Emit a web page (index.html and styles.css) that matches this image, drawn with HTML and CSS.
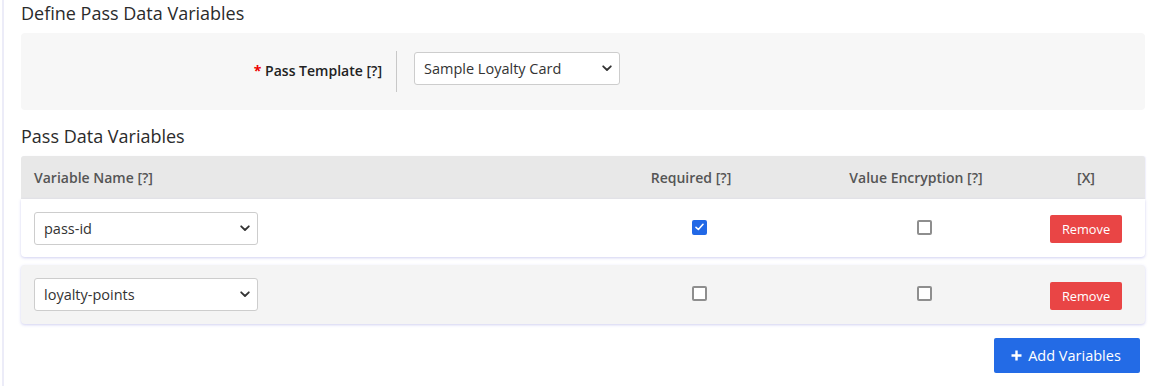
FILE: index.html
```html
<!DOCTYPE html>
<html>
<head>
<meta charset="utf-8">
<link rel="stylesheet" href="styles.css">
</head>
<body>
<div class="page">
  <h2 class="title">Define Pass Data Variables</h2>
  <div class="panel">
    <div class="label-col"><span class="req">*</span>&nbsp;Pass Template [?]</div>
    <div class="select-wrap tmpl">
      <select class="select"><option>Sample Loyalty Card</option></select>
      <svg class="chev" width="10" height="7" viewBox="0 0 10 7"><path d="M1.2 1.3 L5 5 L8.8 1.3" fill="none" stroke="#333" stroke-width="1.8" stroke-linecap="round" stroke-linejoin="round"/></svg>
    </div>
  </div>

  <h2 class="title second">Pass Data Variables</h2>
  <div class="table">
    <div class="thead grid">
      <div class="c1">Variable Name [?]</div>
      <div class="cc hshift">Required [?]</div>
      <div class="cc hshift">Value Encryption [?]</div>
      <div class="cc">[X]</div>
    </div>
    <div class="row grid">
      <div class="c1">
        <div class="select-wrap var">
          <select class="select"><option>pass-id</option></select>
          <svg class="chev" width="10" height="7" viewBox="0 0 10 7"><path d="M1.2 1.3 L5 5 L8.8 1.3" fill="none" stroke="#333" stroke-width="1.8" stroke-linecap="round" stroke-linejoin="round"/></svg>
        </div>
      </div>
      <div class="cc"><span class="cb checked"><svg width="9" height="8" viewBox="0 0 9 8"><path d="M1 4.3 L3.4 6.5 L8 1.3" fill="none" stroke="#fff" stroke-width="1.6" stroke-linecap="round" stroke-linejoin="round"/></svg></span></div>
      <div class="cc"><span class="cb"></span></div>
      <div class="cc"><button class="remove">Remove</button></div>
    </div>
    <div class="row grid alt">
      <div class="c1">
        <div class="select-wrap var">
          <select class="select"><option>loyalty-points</option></select>
          <svg class="chev" width="10" height="7" viewBox="0 0 10 7"><path d="M1.2 1.3 L5 5 L8.8 1.3" fill="none" stroke="#333" stroke-width="1.8" stroke-linecap="round" stroke-linejoin="round"/></svg>
        </div>
      </div>
      <div class="cc"><span class="cb"></span></div>
      <div class="cc"><span class="cb"></span></div>
      <div class="cc"><button class="remove">Remove</button></div>
    </div>
  </div>
  <div class="actions">
    <button class="add"><svg width="11" height="11" viewBox="0 0 11 11"><path d="M5.5 0.5 V10.5 M0.5 5.5 H10.5" stroke="#fff" stroke-width="2.4"/></svg><span>Add Variables</span></button>
  </div>
</div>
</body>
</html>
```
FILE: styles.css
```css
* { box-sizing: border-box; }
body {
  margin: 0;
  background: #fff;
  font-family: "Open Sans", "Noto Sans", sans-serif;
  color: #333;
}
.page {
  margin-left: 2px;
  border-left: 2px solid #ececf8;
  padding: 1px 16px 0 17px;
  min-height: 386px;
}
.title {
  margin: 0;
  font-size: 18px;
  font-weight: 400;
  line-height: 24px;
  color: #2b2b2b;
}
.second { margin-top: 14px; }
.panel {
  margin-top: 8px;
  background: #f7f7f7;
  border-radius: 4px;
  height: 77px;
  padding: 18px 0;
  display: flex;
  align-items: flex-start;
}
.label-col {
  width: 376px;
  height: 41px;
  border-right: 1px solid #c8c8c8;
  padding-right: 14px;
  display: flex;
  align-items: center;
  justify-content: flex-end;
  font-size: 14px;
  font-weight: 600;
  color: #222;
  padding-bottom: 3px;
}
.req { color: #e00; font-weight: 700; }
.select-wrap {
  position: relative;
  height: 33px;
}
.tmpl { width: 206px; margin-left: 17px; margin-top: 1px; }
.var { width: 224px; }
.select {
  appearance: none;
  -webkit-appearance: none;
  width: 100%;
  height: 100%;
  border: 1px solid #cdcdcd;
  border-radius: 3px;
  background: #fff;
  font-family: "Open Sans", "Noto Sans", sans-serif;
  font-size: 14.5px;
  color: #333;
  padding: 0 9px;
}
.chev {
  position: absolute;
  right: 8px;
  top: 13px;
}
.table { margin-top: 8px; }
.grid {
  display: grid;
  grid-template-columns: 556px 244px 206px 118px;
  align-items: center;
}
.thead {
  background: #e8e8e8;
  height: 43px;
  border-radius: 3px 3px 0 0;
  font-size: 14px;
  font-weight: 600;
  color: #555;
  box-shadow: 1px 0 1px rgba(120, 120, 220, 0.12);
}
.c1 { padding-left: 13px; }
.cc { display: flex; justify-content: center; }
.hshift { padding-right: 16px; }
.row {
  height: 58px;
  background: #fff;
  border-radius: 0 0 4px 4px;
  box-shadow: 0 1px 3px rgba(90, 90, 210, 0.28);
}
.row.alt {
  margin-top: 8px;
  height: 59px;
  background: #f4f4f4;
  border-radius: 4px;
}
.cb {
  width: 15px;
  height: 15px;
  margin-bottom: 2px;
  border: 2px solid #8e8e8e;
  border-radius: 2px;
  background: #fff;
  display: flex;
  align-items: center;
  justify-content: center;
}
.cb.checked {
  background: #2168e6;
  border-color: #2168e6;
}
.remove {
  width: 72px;
  height: 28px;
  border: 0;
  border-radius: 2px;
  background: #e94545;
  color: #fff;
  font-family: "Open Sans", "Noto Sans", sans-serif;
  font-size: 12.8px;
  margin-top: 2px;
}
.actions {
  display: flex;
  justify-content: flex-end;
  padding-right: 5px;
  margin-top: 14px;
}
.add {
  width: 146px;
  height: 35px;
  border: 0;
  border-radius: 2px;
  background: #236be6;
  color: #fff;
  font-family: "Open Sans", "Noto Sans", sans-serif;
  font-size: 14.5px;
  display: flex;
  align-items: center;
  justify-content: center;
  gap: 6px;
  padding: 0 2px 0 0;
}
```
